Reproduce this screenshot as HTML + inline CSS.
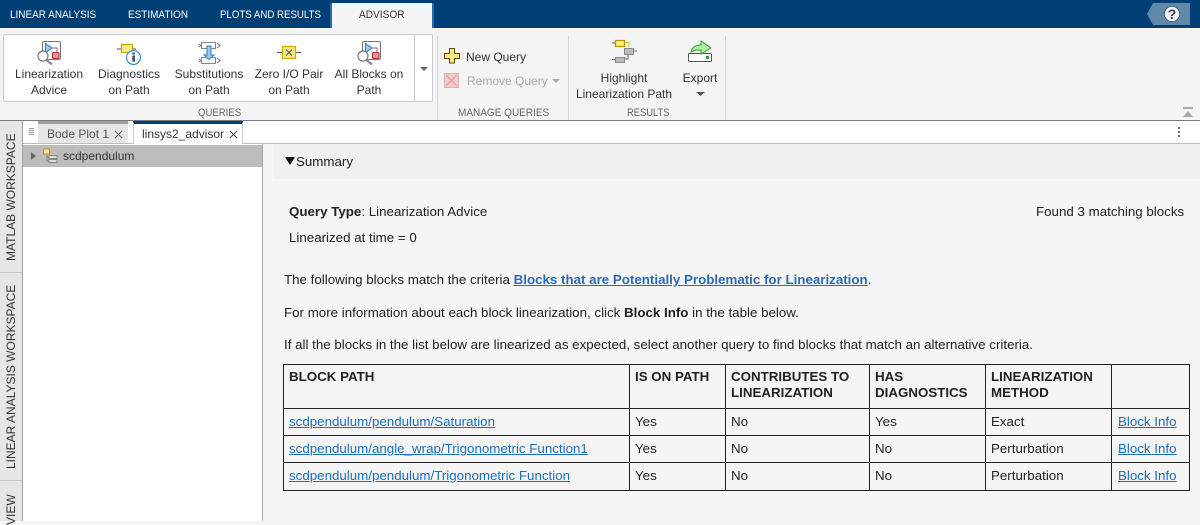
<!DOCTYPE html>
<html><head><meta charset="utf-8"><style>
html,body{margin:0;padding:0}
body{width:1200px;height:521px;overflow:hidden;position:relative;background:#f5f5f5;font-family:"Liberation Sans",sans-serif;font-size:13.33px;color:#212121}
.a{position:absolute;white-space:nowrap}
.c{text-align:center;transform:translateX(-50%)}
.t{font-size:12px;color:#333;line-height:16px}
.tab{color:#fff;font-size:11px;top:9px;transform:scaleX(.905);transform-origin:0 0}
.g{color:#666;font-size:11px;top:107px;transform-origin:0 0}
.l{background:#222;position:absolute}
.p{color:#212121;left:284px}
.h{font-weight:bold;line-height:16px;top:369px}
a{color:#1a6fc0;text-decoration:underline}
svg{position:absolute;overflow:visible}
.v{position:absolute;transform-origin:0 0;transform:rotate(-90deg);white-space:nowrap;font-size:12px;color:#333}
</style></head><body>
<div class="a" style="left:0;top:0;width:1200px;height:28px;background:#003f76"></div>
<div class="a tab" style="left:10px">LINEAR ANALYSIS</div>
<div class="a tab" style="left:128px">ESTIMATION</div>
<div class="a tab" style="left:220px;transform:scaleX(.88)">PLOTS AND RESULTS</div>
<div class="a" style="left:330px;top:3px;width:100px;height:25px;background:#f5f5f5;border:solid #1a70b8;border-width:0 2px;border-radius:2px 2px 0 0"></div>
<div class="a" style="left:359px;top:9px;color:#333;font-size:11px;transform:scaleX(.92);transform-origin:0 0">ADVISOR</div>
<svg style="left:1147px;top:3px" width="44" height="22"><path d="M0 11L6 0H43V22H6Z" fill="#5f88ab"/><circle cx="25" cy="11" r="7.500" fill="#f4f4f4" stroke="#2b3f58" stroke-width=".6"/><text x="25" y="16" text-anchor="middle" font-size="14" font-weight="bold" font-family="Liberation Sans" fill="#2b3f58">?</text></svg>
<div class="a" style="left:0;top:28px;width:1200px;height:92px;background:#f4f4f4"></div>
<div class="a" style="left:3px;top:34px;width:428px;height:66px;background:#fff;border:1px solid #ccc;border-radius:2px"></div>
<div class="a" style="left:414px;top:34px;width:1px;height:67px;background:#ccc"></div>
<div class="a" style="left:437px;top:36px;width:1px;height:84px;background:#d4d4d4"></div>
<div class="a" style="left:568px;top:36px;width:1px;height:84px;background:#d4d4d4"></div>
<div class="a" style="left:725px;top:36px;width:1px;height:84px;background:#d4d4d4"></div>
<svg style="left:36px;top:40px" width="28" height="28"><rect x="6.500" y="1.500" width="18" height="18" rx="1.500" fill="#fff" stroke="#777"/><path d="M9.500 3.500V12.500L16 8Z" fill="#9cc9ec" stroke="#2f7fc0"/><path d="M16 8H21V12" fill="none" stroke="#777"/><rect x="16.500" y="12.500" width="6.500" height="6" rx="1" fill="#f09090" stroke="#b03030"/><circle cx="7" cy="16" r="5" fill="#fff" stroke="#777" stroke-width="1.200"/><path d="M10.500 20L16 24.500" stroke="#888" stroke-width="2.200"/></svg>
<svg style="left:115px;top:42px" width="28" height="28"><path d="M2 7H6M17 7H21" stroke="#555"/><rect x="6.500" y="2.500" width="11" height="8" fill="#fbe985" stroke="#c9a800" stroke-width="1.200"/><circle cx="18.500" cy="15.500" r="7" fill="#fff" stroke="#3b8ed0" stroke-width="1.200"/><rect x="17.300" y="13.500" width="2.600" height="6" fill="#1f4f8a"/><rect x="17.300" y="10.500" width="2.600" height="2" fill="#1f4f8a"/></svg>
<svg style="left:198px;top:40px" width="24" height="28"><rect x="3.500" y="2.500" width="14" height="6" fill="#fff" stroke="#888"/><rect x="3.500" y="17.500" width="14" height="6" fill="#fff" stroke="#888"/><path d="M1 4L3 5.500 1 7M19 3L22 5.500 19 8M1 19L3 20.500 1 22M19 18L22 20.500 19 23" fill="none" stroke="#777"/><path d="M9 6H13V15H16L11 19.500 6 15H9Z" fill="#9cc9ec" stroke="#2f7fc0"/></svg>
<svg style="left:277px;top:45px" width="24" height="16"><path d="M0 7.500H24" stroke="#555"/><rect x="5.500" y="1.500" width="13" height="12" fill="#fbe985" stroke="#d0ac00" stroke-width="1.300"/><path d="M9 4.500L15 10.500M15 4.500L9 10.500" stroke="#555"/></svg>
<svg style="left:356px;top:40px" width="28" height="28"><rect x="6.500" y="1.500" width="18" height="18" rx="1.500" fill="#fff" stroke="#777"/><path d="M9.500 3.500V12.500L16 8Z" fill="#9cc9ec" stroke="#2f7fc0"/><path d="M16 8H21V12" fill="none" stroke="#777"/><rect x="16.500" y="12.500" width="6.500" height="6" rx="1" fill="#f09090" stroke="#b03030"/><circle cx="7" cy="16" r="5" fill="#fff" stroke="#777" stroke-width="1.200"/><path d="M10.500 20L16 24.500" stroke="#888" stroke-width="2.200"/></svg>
<div class="a t c" style="left:49px;top:66px">Linearization<br>Advice</div>
<div class="a t c" style="left:129px;top:66px">Diagnostics<br>on Path</div>
<div class="a t c" style="left:209px;top:66px">Substitutions<br>on Path</div>
<div class="a t c" style="left:289px;top:66px">Zero I/O Pair<br>on Path</div>
<div class="a t c" style="left:369px;top:66px">All Blocks on<br>Path</div>
<svg style="left:420px;top:67px" width="8" height="4"><path d="M0 0H8L4 4Z" fill="#666"/></svg>
<div class="a g" style="left:198px;transform:scaleX(.87)">QUERIES</div>
<svg style="left:444px;top:48px" width="16" height="16"><path d="M5.500 .5H10.500V5.500H15.500V10.500H10.500V15H5.500V10.500H.5V5.500H5.500Z" fill="#fbe985" stroke="#5a4a00" stroke-linejoin="round"/></svg>
<div class="a t" style="left:466px;top:49px">New Query</div>
<svg style="left:444px;top:73px" width="16" height="16"><rect x=".5" y=".5" width="14" height="14" fill="#f5c9c9" stroke="#ddb0b0"/><path d="M2 2L13 13M13 2L2 13" stroke="#d8a0a0"/></svg>
<div class="a t" style="left:467px;top:73px;color:#a8a8a8">Remove Query</div>
<svg style="left:552px;top:79px" width="8" height="4"><path d="M0 0H8L4 4Z" fill="#aaa"/></svg>
<div class="a g" style="left:458px;transform:scaleX(.91)">MANAGE QUERIES</div>
<svg style="left:612px;top:39px" width="26" height="24"><path d="M13 3.500H17V8" fill="none" stroke="#e0bd10"/><rect x="3.500" y="1.500" width="9" height="6" fill="#fbe985" stroke="#b59800" stroke-width="1.200"/><path d="M0 4H3M22 12H25M0 20.500H3M16 15V20H13" fill="none" stroke="#666"/><rect x="12.500" y="9.500" width="9" height="6" fill="#bbb" stroke="#888"/><rect x="3.500" y="18.500" width="9" height="5" fill="#bbb" stroke="#888"/></svg>
<div class="a t c" style="left:624px;top:70px">Highlight<br>Linearization Path</div>
<svg style="left:687px;top:39px" width="26" height="24"><rect x="1.500" y="14.500" width="23" height="8" rx="1" fill="#fff" stroke="#555"/><circle cx="20.500" cy="18.500" r="1.800" fill="#2a9a3a"/><path d="M4 13C5 8 9 6 14 6V2L24 9 14 15V11C10 11 7 11 4 13Z" fill="#aef0a0" stroke="#3e9a40"/></svg>
<div class="a t c" style="left:700px;top:70px">Export</div>
<svg style="left:696px;top:92px" width="9" height="4"><path d="M0 0H9L4.500 4Z" fill="#555"/></svg>
<div class="a g" style="left:627px;transform:scaleX(.85)">RESULTS</div>
<svg style="left:1183px;top:107px" width="11" height="11"><rect width="10" height="2" fill="#aaa"/><path d="M0 10L5 4 10 10Z" fill="#aaa"/></svg>
<div class="a" style="left:0;top:120px;width:1200px;height:1px;background:#7c7c7c"></div>
<div class="a" style="left:0;top:121px;width:1200px;height:23px;background:#fff"></div>
<div class="a" style="left:23px;top:143px;width:1177px;height:1px;background:#bdbdbd"></div>
<div class="a" style="left:0;top:121px;width:23px;height:400px;background:#e6e6e6"></div>
<div class="a" style="left:22px;top:121px;width:1px;height:400px;background:#a0a0a0"></div>
<div class="a" style="left:0;top:272px;width:22px;height:1px;background:#c4c4c4"></div>
<div class="a" style="left:0;top:480px;width:22px;height:1px;background:#c4c4c4"></div>
<div class="v" style="left:4px;top:261px">MATLAB WORKSPACE</div>
<div class="v" style="left:4px;top:469px">LINEAR ANALYSIS WORKSPACE</div>
<div class="v" style="left:4px;top:525px">VIEW</div>
<div class="a" style="left:29px;top:128px;width:5px;height:7px;background:repeating-linear-gradient(#999 0 1px,transparent 1px 2px)"></div>
<div class="a" style="left:38px;top:121px;width:90px;height:22px;background:#e6e6e6;border-top:3px solid #a0a0a0;box-sizing:border-box"></div>
<div class="a" style="left:47px;top:127px;color:#555;font-size:12px">Bode Plot 1</div>
<svg style="left:114px;top:130px" width="9" height="9"><path d="M1 1L8 8M8 1L1 8" stroke="#666"/></svg>
<div class="a" style="left:133px;top:121px;width:110px;height:23px;background:#fff;border-top:3px solid #003f76;border-left:1px solid #ccc;border-right:1px solid #ccc;box-sizing:border-box"></div>
<div class="a" style="left:142px;top:127px;color:#333;font-size:12px">linsys2_advisor</div>
<svg style="left:229px;top:130px" width="9" height="9"><path d="M1 1L8 8M8 1L1 8" stroke="#444"/></svg>
<div class="a" style="left:1178px;top:127px;width:2px;height:2px;background:#666;box-shadow:0 4px #666,0 8px #666"></div>
<div class="a" style="left:23px;top:144px;width:239px;height:377px;background:#fff"></div>
<div class="a" style="left:262px;top:144px;width:1px;height:377px;background:#a6a6a6"></div>
<div class="a" style="left:23px;top:145px;width:239px;height:22px;background:#bcbcbc"></div>
<svg style="left:31px;top:152px" width="5" height="8"><path d="M0 0L5 4 0 8Z" fill="#666"/></svg>
<svg style="left:42px;top:148px" width="16" height="16"><rect x="1.500" y="1" width="6" height="5" fill="#fbe985" stroke="#b59800"/><path d="M5 7V13H7M5 9H7" fill="none" stroke="#777" stroke-width=".8"/><rect x="7" y="7.500" width="8" height="3" fill="#ddd" stroke="#777" stroke-width=".8"/><rect x="7" y="11.500" width="8" height="3" fill="#ddd" stroke="#777" stroke-width=".8"/></svg>
<div class="a" style="left:63px;top:149px;color:#333;font-size:12px">scdpendulum</div>
<div class="a" style="left:273px;top:144px;width:927px;height:35px;background:#f0f0f0"></div>
<svg style="left:285px;top:157px" width="10" height="8"><path d="M0 0H10L5 8Z" fill="#111"/></svg>
<div class="a" style="left:296px;top:154px;color:#222">Summary</div>
<div class="a p" style="left:289px;top:204px"><b>Query Type</b>: Linearization Advice</div>
<div class="a p" style="left:1036px;top:204px">Found 3 matching blocks</div>
<div class="a p" style="left:289px;top:230px">Linearized at time = 0</div>
<div class="a p" style="top:272px">The following blocks match the criteria <a href="#" style="font-weight:bold;color:#2b6cb0">Blocks that are Potentially Problematic for Linearization</a>.</div>
<div class="a p" style="top:305px">For more information about each block linearization, click <b>Block Info</b> in the table below.</div>
<div class="a p" style="top:337px">If all the blocks in the list below are linearized as expected, select another query to find blocks that match an alternative criteria.</div>
<div class="l" style="left:283px;top:364px;width:907px;height:1px"></div>
<div class="l" style="left:283px;top:408px;width:907px;height:1px"></div>
<div class="l" style="left:283px;top:435px;width:907px;height:1px"></div>
<div class="l" style="left:283px;top:462px;width:907px;height:1px"></div>
<div class="l" style="left:283px;top:490px;width:907px;height:1px"></div>
<div class="l" style="left:283px;top:364px;width:1px;height:127px"></div>
<div class="l" style="left:629px;top:364px;width:1px;height:127px"></div>
<div class="l" style="left:725px;top:364px;width:1px;height:127px"></div>
<div class="l" style="left:869px;top:364px;width:1px;height:127px"></div>
<div class="l" style="left:985px;top:364px;width:1px;height:127px"></div>
<div class="l" style="left:1111px;top:364px;width:1px;height:127px"></div>
<div class="l" style="left:1189px;top:364px;width:1px;height:127px"></div>
<div class="a h" style="left:289px">BLOCK PATH</div>
<div class="a h" style="left:635px">IS ON PATH</div>
<div class="a h" style="left:731px">CONTRIBUTES TO<br>LINEARIZATION</div>
<div class="a h" style="left:875px">HAS<br>DIAGNOSTICS</div>
<div class="a h" style="left:991px">LINEARIZATION<br>METHOD</div>
<a class="a" href="#" style="left:289px;top:414px">scdpendulum/pendulum/Saturation</a>
<a class="a" href="#" style="left:289px;top:441px">scdpendulum/angle_wrap/Trigonometric Function1</a>
<a class="a" href="#" style="left:289px;top:468px">scdpendulum/pendulum/Trigonometric Function</a>
<div class="a" style="left:635px;top:414px">Yes</div><div class="a" style="left:635px;top:441px">Yes</div><div class="a" style="left:635px;top:468px">Yes</div>
<div class="a" style="left:731px;top:414px">No</div><div class="a" style="left:731px;top:441px">No</div><div class="a" style="left:731px;top:468px">No</div>
<div class="a" style="left:875px;top:414px">Yes</div><div class="a" style="left:875px;top:441px">No</div><div class="a" style="left:875px;top:468px">No</div>
<div class="a" style="left:991px;top:414px">Exact</div><div class="a" style="left:991px;top:441px">Perturbation</div><div class="a" style="left:991px;top:468px">Perturbation</div>
<a class="a" href="#" style="left:1118px;top:414px">Block Info</a>
<a class="a" href="#" style="left:1118px;top:441px">Block Info</a>
<a class="a" href="#" style="left:1118px;top:468px">Block Info</a>
</body></html>
